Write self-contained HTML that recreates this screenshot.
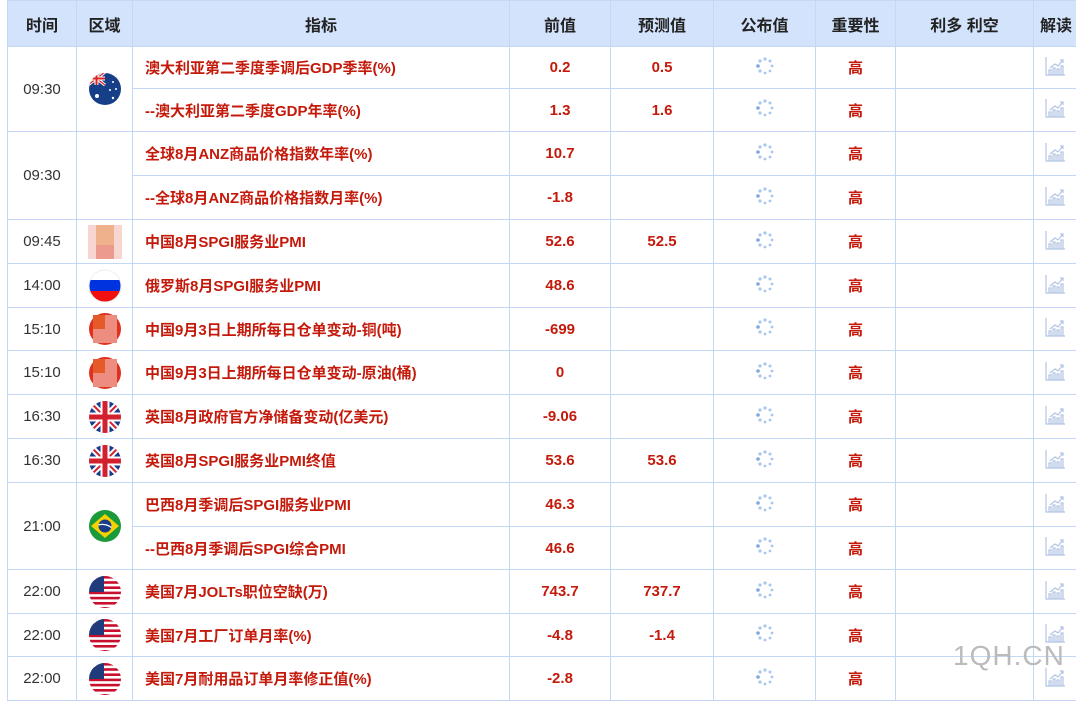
<!DOCTYPE html>
<html><head><meta charset="utf-8">
<style>
body{margin:0;width:1076px;height:695px;overflow:hidden;background:#fff;font-family:"Liberation Sans","Noto Sans CJK SC",sans-serif;position:relative}
table{position:absolute;left:7px;top:0;border-collapse:collapse;table-layout:fixed;width:1080px}
td,th{border:1px solid #c3d8f4;padding:0;text-align:center;vertical-align:middle;font-size:15px}
th{background:#d3e3fc;color:#222;font-weight:bold;font-size:16px;height:45px}
td.t{color:#333;font-size:15px}
td.n{color:#c41a0b;font-weight:bold;text-align:left;padding-left:12px}
td.v{color:#c41a0b;font-weight:bold}
td.h{color:#c41a0b;font-weight:bold}
td.c{text-align:left;padding-left:10px}
svg.f{width:34px;height:34px;display:block;margin:auto}
.wm{position:absolute;left:953px;top:640px;font-size:28px;color:#bbb;letter-spacing:1px;font-family:"Liberation Sans",sans-serif}
</style></head><body>
<svg width="0" height="0" style="position:absolute">
<defs>
<symbol id="sp" viewBox="0 0 20 20"><g fill="#a9c6ec"><circle cx="10" cy="3" r="1.6"/><circle cx="15" cy="5" r="1.5"/><circle cx="17" cy="10" r="1.4"/><circle cx="15" cy="15" r="1.4"/><circle cx="10" cy="17" r="1.4"/><circle cx="5" cy="15" r="1.6"/><circle cx="3" cy="10" r="1.8" fill="#7fa6dd"/><circle cx="5" cy="5" r="1.6"/></g></symbol>
<clipPath id="cc"><circle cx="17" cy="17" r="16"/></clipPath>
<symbol id="au" viewBox="0 0 34 34"><g clip-path="url(#cc)"><rect width="34" height="34" fill="#173f88"/><path d="M0 0L17 13M17 0L0 13" stroke="#fff" stroke-width="3"/><path d="M0 0L17 13M17 0L0 13" stroke="#d22" stroke-width="1.2"/><path d="M8.5 0V13M0 6.5H17" stroke="#fff" stroke-width="4"/><path d="M8.5 0V13M0 6.5H17" stroke="#d22" stroke-width="2"/><g fill="#fff"><circle cx="9" cy="24" r="2"/><circle cx="25" cy="10" r="1"/><circle cx="28" cy="17" r="1"/><circle cx="22" cy="18" r="1"/><circle cx="25" cy="26" r="1.2"/></g></g></symbol>
<symbol id="ru" viewBox="0 0 34 34"><g clip-path="url(#cc)"><rect width="34" height="11" fill="#fff"/><rect y="11" width="34" height="11" fill="#0033e0"/><rect y="22" width="34" height="12" fill="#f01010"/></g><circle cx="17" cy="17" r="16" fill="none" stroke="#eee"/></symbol>
<symbol id="uk" viewBox="0 0 34 34"><g clip-path="url(#cc)"><rect width="34" height="34" fill="#1b3a8a"/><path d="M0 0L34 34M34 0L0 34" stroke="#fff" stroke-width="6"/><path d="M0 0L34 34M34 0L0 34" stroke="#d3202f" stroke-width="2"/><path d="M17 0V34M0 17H34" stroke="#fff" stroke-width="9"/><path d="M17 0V34M0 17H34" stroke="#d3202f" stroke-width="5"/></g></symbol>
<symbol id="br" viewBox="0 0 34 34"><g clip-path="url(#cc)"><rect width="34" height="34" fill="#1a9a3a"/><path d="M17 5L31 17L17 29L3 17Z" fill="#f6d200"/><circle cx="17" cy="17" r="6.5" fill="#1a3a8a"/><path d="M10.5 16Q17 14 23.5 18.5" stroke="#fff" stroke-width="1.2" fill="none"/></g></symbol>
<symbol id="us" viewBox="0 0 34 34"><g clip-path="url(#cc)"><rect width="34" height="34" fill="#fff"/><g fill="#c8102e"><rect y="1" width="34" height="2.6"/><rect y="6.2" width="34" height="2.6"/><rect y="11.4" width="34" height="2.6"/><rect y="16.6" width="34" height="2.6"/><rect y="21.8" width="34" height="2.6"/><rect y="27" width="34" height="2.6"/><rect y="32" width="34" height="2.6"/></g><rect width="16" height="17" fill="#1f3b7c"/></g></symbol>
<symbol id="cn" viewBox="0 0 34 34"><circle cx="17" cy="17" r="16" fill="#e03020"/><rect x="5" y="3" width="24" height="28" fill="#ec8d80"/><rect x="5" y="3" width="12" height="14" fill="#e45a28"/></symbol>
<symbol id="bl" viewBox="0 0 34 34"><rect x="0" y="0" width="34" height="40" fill="#f7d5d0"/><rect x="8" y="0" width="18" height="20" fill="#efb08c"/><rect x="8" y="20" width="18" height="20" fill="#ec9a8e"/></symbol>
</defs></svg>
<table>
<colgroup><col style="width:69px"><col style="width:56px"><col style="width:377px"><col style="width:101px"><col style="width:103px"><col style="width:102px"><col style="width:80px"><col style="width:138px"><col style="width:54px"></colgroup>
<tr><th>时间</th><th>区域</th><th>指标</th><th>前值</th><th>预测值</th><th>公布值</th><th>重要性</th><th>利多 利空</th><th style="text-align:left;padding-left:6px">解读</th></tr>
<tr style="height:42px"><td class="t" rowspan="2">09:30</td><td rowspan="2"><svg class="f"><use href="#au"/></svg></td><td class="n">澳大利亚第二季度季调后GDP季率(%)</td><td class="v">0.2</td><td class="v">0.5</td><td><svg width="20" height="20"><use href="#sp"/></svg></td><td class="h">高</td><td></td><td class="c"><svg width="22" height="22" viewBox="0 0 22 22" fill="none" stroke="#b3c4e4" stroke-width="1.2"><path d="M2 2V20H21M6 13L11 9L14 11L19 5M16 5H19V8M5 20V15H7V20M9 20V13H11V20M13 20V14H15V20M17 20V11H19V20"/></svg></td></tr>
<tr style="height:43px"><td class="n">--澳大利亚第二季度GDP年率(%)</td><td class="v">1.3</td><td class="v">1.6</td><td><svg width="20" height="20"><use href="#sp"/></svg></td><td class="h">高</td><td></td><td class="c"><svg width="22" height="22" viewBox="0 0 22 22" fill="none" stroke="#b3c4e4" stroke-width="1.2"><path d="M2 2V20H21M6 13L11 9L14 11L19 5M16 5H19V8M5 20V15H7V20M9 20V13H11V20M13 20V14H15V20M17 20V11H19V20"/></svg></td></tr>
<tr style="height:44px"><td class="t" rowspan="2">09:30</td><td rowspan="2"></td><td class="n">全球8月ANZ商品价格指数年率(%)</td><td class="v">10.7</td><td class="v"></td><td><svg width="20" height="20"><use href="#sp"/></svg></td><td class="h">高</td><td></td><td class="c"><svg width="22" height="22" viewBox="0 0 22 22" fill="none" stroke="#b3c4e4" stroke-width="1.2"><path d="M2 2V20H21M6 13L11 9L14 11L19 5M16 5H19V8M5 20V15H7V20M9 20V13H11V20M13 20V14H15V20M17 20V11H19V20"/></svg></td></tr>
<tr style="height:44px"><td class="n">--全球8月ANZ商品价格指数月率(%)</td><td class="v">-1.8</td><td class="v"></td><td><svg width="20" height="20"><use href="#sp"/></svg></td><td class="h">高</td><td></td><td class="c"><svg width="22" height="22" viewBox="0 0 22 22" fill="none" stroke="#b3c4e4" stroke-width="1.2"><path d="M2 2V20H21M6 13L11 9L14 11L19 5M16 5H19V8M5 20V15H7V20M9 20V13H11V20M13 20V14H15V20M17 20V11H19V20"/></svg></td></tr>
<tr style="height:44px"><td class="t">09:45</td><td><svg class="f"><use href="#bl"/></svg></td><td class="n">中国8月SPGI服务业PMI</td><td class="v">52.6</td><td class="v">52.5</td><td><svg width="20" height="20"><use href="#sp"/></svg></td><td class="h">高</td><td></td><td class="c"><svg width="22" height="22" viewBox="0 0 22 22" fill="none" stroke="#b3c4e4" stroke-width="1.2"><path d="M2 2V20H21M6 13L11 9L14 11L19 5M16 5H19V8M5 20V15H7V20M9 20V13H11V20M13 20V14H15V20M17 20V11H19V20"/></svg></td></tr>
<tr style="height:44px"><td class="t">14:00</td><td><svg class="f"><use href="#ru"/></svg></td><td class="n">俄罗斯8月SPGI服务业PMI</td><td class="v">48.6</td><td class="v"></td><td><svg width="20" height="20"><use href="#sp"/></svg></td><td class="h">高</td><td></td><td class="c"><svg width="22" height="22" viewBox="0 0 22 22" fill="none" stroke="#b3c4e4" stroke-width="1.2"><path d="M2 2V20H21M6 13L11 9L14 11L19 5M16 5H19V8M5 20V15H7V20M9 20V13H11V20M13 20V14H15V20M17 20V11H19V20"/></svg></td></tr>
<tr style="height:43px"><td class="t">15:10</td><td><svg class="f"><use href="#cn"/></svg></td><td class="n">中国9月3日上期所每日仓单变动-铜(吨)</td><td class="v">-699</td><td class="v"></td><td><svg width="20" height="20"><use href="#sp"/></svg></td><td class="h">高</td><td></td><td class="c"><svg width="22" height="22" viewBox="0 0 22 22" fill="none" stroke="#b3c4e4" stroke-width="1.2"><path d="M2 2V20H21M6 13L11 9L14 11L19 5M16 5H19V8M5 20V15H7V20M9 20V13H11V20M13 20V14H15V20M17 20V11H19V20"/></svg></td></tr>
<tr style="height:44px"><td class="t">15:10</td><td><svg class="f"><use href="#cn"/></svg></td><td class="n">中国9月3日上期所每日仓单变动-原油(桶)</td><td class="v">0</td><td class="v"></td><td><svg width="20" height="20"><use href="#sp"/></svg></td><td class="h">高</td><td></td><td class="c"><svg width="22" height="22" viewBox="0 0 22 22" fill="none" stroke="#b3c4e4" stroke-width="1.2"><path d="M2 2V20H21M6 13L11 9L14 11L19 5M16 5H19V8M5 20V15H7V20M9 20V13H11V20M13 20V14H15V20M17 20V11H19V20"/></svg></td></tr>
<tr style="height:44px"><td class="t">16:30</td><td><svg class="f"><use href="#uk"/></svg></td><td class="n">英国8月政府官方净储备变动(亿美元)</td><td class="v">-9.06</td><td class="v"></td><td><svg width="20" height="20"><use href="#sp"/></svg></td><td class="h">高</td><td></td><td class="c"><svg width="22" height="22" viewBox="0 0 22 22" fill="none" stroke="#b3c4e4" stroke-width="1.2"><path d="M2 2V20H21M6 13L11 9L14 11L19 5M16 5H19V8M5 20V15H7V20M9 20V13H11V20M13 20V14H15V20M17 20V11H19V20"/></svg></td></tr>
<tr style="height:44px"><td class="t">16:30</td><td><svg class="f"><use href="#uk"/></svg></td><td class="n">英国8月SPGI服务业PMI终值</td><td class="v">53.6</td><td class="v">53.6</td><td><svg width="20" height="20"><use href="#sp"/></svg></td><td class="h">高</td><td></td><td class="c"><svg width="22" height="22" viewBox="0 0 22 22" fill="none" stroke="#b3c4e4" stroke-width="1.2"><path d="M2 2V20H21M6 13L11 9L14 11L19 5M16 5H19V8M5 20V15H7V20M9 20V13H11V20M13 20V14H15V20M17 20V11H19V20"/></svg></td></tr>
<tr style="height:44px"><td class="t" rowspan="2">21:00</td><td rowspan="2"><svg class="f"><use href="#br"/></svg></td><td class="n">巴西8月季调后SPGI服务业PMI</td><td class="v">46.3</td><td class="v"></td><td><svg width="20" height="20"><use href="#sp"/></svg></td><td class="h">高</td><td></td><td class="c"><svg width="22" height="22" viewBox="0 0 22 22" fill="none" stroke="#b3c4e4" stroke-width="1.2"><path d="M2 2V20H21M6 13L11 9L14 11L19 5M16 5H19V8M5 20V15H7V20M9 20V13H11V20M13 20V14H15V20M17 20V11H19V20"/></svg></td></tr>
<tr style="height:43px"><td class="n">--巴西8月季调后SPGI综合PMI</td><td class="v">46.6</td><td class="v"></td><td><svg width="20" height="20"><use href="#sp"/></svg></td><td class="h">高</td><td></td><td class="c"><svg width="22" height="22" viewBox="0 0 22 22" fill="none" stroke="#b3c4e4" stroke-width="1.2"><path d="M2 2V20H21M6 13L11 9L14 11L19 5M16 5H19V8M5 20V15H7V20M9 20V13H11V20M13 20V14H15V20M17 20V11H19V20"/></svg></td></tr>
<tr style="height:44px"><td class="t">22:00</td><td><svg class="f"><use href="#us"/></svg></td><td class="n">美国7月JOLTs职位空缺(万)</td><td class="v">743.7</td><td class="v">737.7</td><td><svg width="20" height="20"><use href="#sp"/></svg></td><td class="h">高</td><td></td><td class="c"><svg width="22" height="22" viewBox="0 0 22 22" fill="none" stroke="#b3c4e4" stroke-width="1.2"><path d="M2 2V20H21M6 13L11 9L14 11L19 5M16 5H19V8M5 20V15H7V20M9 20V13H11V20M13 20V14H15V20M17 20V11H19V20"/></svg></td></tr>
<tr style="height:43px"><td class="t">22:00</td><td><svg class="f"><use href="#us"/></svg></td><td class="n">美国7月工厂订单月率(%)</td><td class="v">-4.8</td><td class="v">-1.4</td><td><svg width="20" height="20"><use href="#sp"/></svg></td><td class="h">高</td><td></td><td class="c"><svg width="22" height="22" viewBox="0 0 22 22" fill="none" stroke="#b3c4e4" stroke-width="1.2"><path d="M2 2V20H21M6 13L11 9L14 11L19 5M16 5H19V8M5 20V15H7V20M9 20V13H11V20M13 20V14H15V20M17 20V11H19V20"/></svg></td></tr>
<tr style="height:44px"><td class="t">22:00</td><td><svg class="f"><use href="#us"/></svg></td><td class="n">美国7月耐用品订单月率修正值(%)</td><td class="v">-2.8</td><td class="v"></td><td><svg width="20" height="20"><use href="#sp"/></svg></td><td class="h">高</td><td></td><td class="c"><svg width="22" height="22" viewBox="0 0 22 22" fill="none" stroke="#b3c4e4" stroke-width="1.2"><path d="M2 2V20H21M6 13L11 9L14 11L19 5M16 5H19V8M5 20V15H7V20M9 20V13H11V20M13 20V14H15V20M17 20V11H19V20"/></svg></td></tr>
</table>
<div class="wm">1QH.CN</div>
</body></html>
